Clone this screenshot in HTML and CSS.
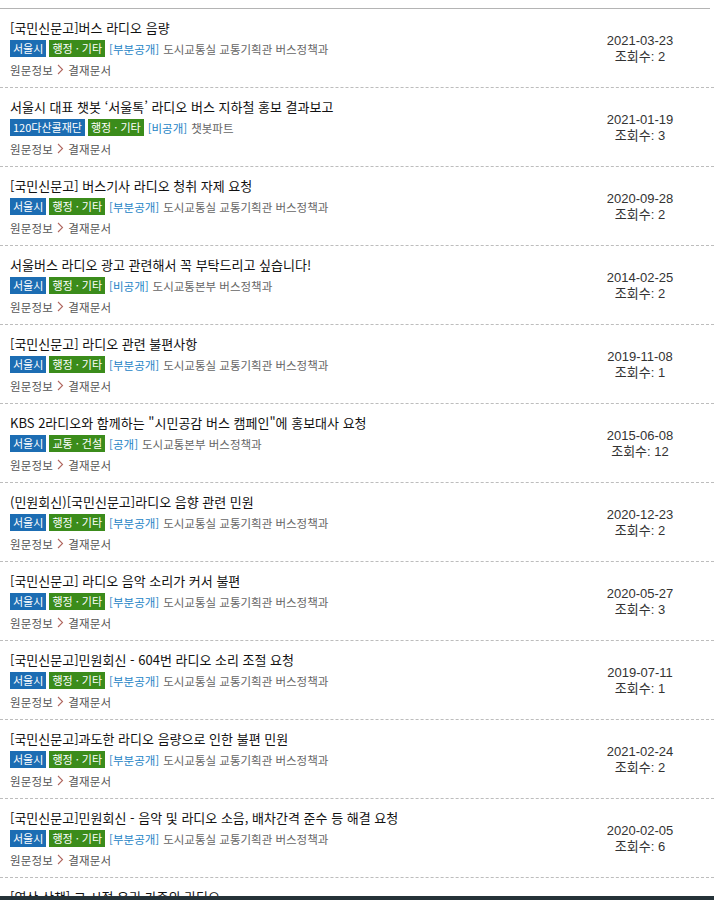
FILE: index.html
```html
<!DOCTYPE html>
<html lang="ko">
<head>
<meta charset="utf-8">
<title>검색 결과</title>
<link rel="stylesheet" href="styles.css">
</head>
<body>
<div class="list">
  <div class="item">
    <div class="main">
      <div class="title">[국민신문고]버스 라디오 음량</div>
      <div class="meta"><span class="tag org">서울시</span><span class="tag cat">행정 · 기타</span><span class="open">[부분공개]</span> <span class="dept">도시교통실 교통기획관 버스정책과</span></div>
      <div class="links"><span>원문정보</span><svg class="chev" width="7" height="11" viewBox="0 0 7 11"><path d="M1 1 L5.5 5.5 L1 10" fill="none" stroke="currentColor" stroke-width="1.1"/></svg><span>결재문서</span></div>
    </div>
    <div class="side"><div>2021-03-23</div><div>조회수: 2</div></div>
  </div>
  <div class="item">
    <div class="main">
      <div class="title">서울시 대표 챗봇 ‘서울톡’ 라디오 버스 지하철 홍보 결과보고</div>
      <div class="meta"><span class="tag org">120다산콜재단</span><span class="tag cat">행정 · 기타</span><span class="open">[비공개]</span> <span class="dept">챗봇파트</span></div>
      <div class="links"><span>원문정보</span><svg class="chev" width="7" height="11" viewBox="0 0 7 11"><path d="M1 1 L5.5 5.5 L1 10" fill="none" stroke="currentColor" stroke-width="1.1"/></svg><span>결재문서</span></div>
    </div>
    <div class="side"><div>2021-01-19</div><div>조회수: 3</div></div>
  </div>
  <div class="item">
    <div class="main">
      <div class="title">[국민신문고] 버스기사 라디오 청취 자제 요청</div>
      <div class="meta"><span class="tag org">서울시</span><span class="tag cat">행정 · 기타</span><span class="open">[부분공개]</span> <span class="dept">도시교통실 교통기획관 버스정책과</span></div>
      <div class="links"><span>원문정보</span><svg class="chev" width="7" height="11" viewBox="0 0 7 11"><path d="M1 1 L5.5 5.5 L1 10" fill="none" stroke="currentColor" stroke-width="1.1"/></svg><span>결재문서</span></div>
    </div>
    <div class="side"><div>2020-09-28</div><div>조회수: 2</div></div>
  </div>
  <div class="item">
    <div class="main">
      <div class="title">서울버스 라디오 광고 관련해서 꼭 부탁드리고 싶습니다!</div>
      <div class="meta"><span class="tag org">서울시</span><span class="tag cat">행정 · 기타</span><span class="open">[비공개]</span> <span class="dept">도시교통본부 버스정책과</span></div>
      <div class="links"><span>원문정보</span><svg class="chev" width="7" height="11" viewBox="0 0 7 11"><path d="M1 1 L5.5 5.5 L1 10" fill="none" stroke="currentColor" stroke-width="1.1"/></svg><span>결재문서</span></div>
    </div>
    <div class="side"><div>2014-02-25</div><div>조회수: 2</div></div>
  </div>
  <div class="item">
    <div class="main">
      <div class="title">[국민신문고] 라디오 관련 불편사항</div>
      <div class="meta"><span class="tag org">서울시</span><span class="tag cat">행정 · 기타</span><span class="open">[부분공개]</span> <span class="dept">도시교통실 교통기획관 버스정책과</span></div>
      <div class="links"><span>원문정보</span><svg class="chev" width="7" height="11" viewBox="0 0 7 11"><path d="M1 1 L5.5 5.5 L1 10" fill="none" stroke="currentColor" stroke-width="1.1"/></svg><span>결재문서</span></div>
    </div>
    <div class="side"><div>2019-11-08</div><div>조회수: 1</div></div>
  </div>
  <div class="item">
    <div class="main">
      <div class="title">KBS 2라디오와 함께하는 "시민공감 버스 캠페인"에 홍보대사 요청</div>
      <div class="meta"><span class="tag org">서울시</span><span class="tag cat">교통 · 건설</span><span class="open">[공개]</span> <span class="dept">도시교통본부 버스정책과</span></div>
      <div class="links"><span>원문정보</span><svg class="chev" width="7" height="11" viewBox="0 0 7 11"><path d="M1 1 L5.5 5.5 L1 10" fill="none" stroke="currentColor" stroke-width="1.1"/></svg><span>결재문서</span></div>
    </div>
    <div class="side"><div>2015-06-08</div><div>조회수: 12</div></div>
  </div>
  <div class="item">
    <div class="main">
      <div class="title">(민원회신)[국민신문고]라디오 음향 관련 민원</div>
      <div class="meta"><span class="tag org">서울시</span><span class="tag cat">행정 · 기타</span><span class="open">[부분공개]</span> <span class="dept">도시교통실 교통기획관 버스정책과</span></div>
      <div class="links"><span>원문정보</span><svg class="chev" width="7" height="11" viewBox="0 0 7 11"><path d="M1 1 L5.5 5.5 L1 10" fill="none" stroke="currentColor" stroke-width="1.1"/></svg><span>결재문서</span></div>
    </div>
    <div class="side"><div>2020-12-23</div><div>조회수: 2</div></div>
  </div>
  <div class="item">
    <div class="main">
      <div class="title">[국민신문고] 라디오 음악 소리가 커서 불편</div>
      <div class="meta"><span class="tag org">서울시</span><span class="tag cat">행정 · 기타</span><span class="open">[부분공개]</span> <span class="dept">도시교통실 교통기획관 버스정책과</span></div>
      <div class="links"><span>원문정보</span><svg class="chev" width="7" height="11" viewBox="0 0 7 11"><path d="M1 1 L5.5 5.5 L1 10" fill="none" stroke="currentColor" stroke-width="1.1"/></svg><span>결재문서</span></div>
    </div>
    <div class="side"><div>2020-05-27</div><div>조회수: 3</div></div>
  </div>
  <div class="item">
    <div class="main">
      <div class="title">[국민신문고]민원회신 - 604번 라디오 소리 조절 요청</div>
      <div class="meta"><span class="tag org">서울시</span><span class="tag cat">행정 · 기타</span><span class="open">[부분공개]</span> <span class="dept">도시교통실 교통기획관 버스정책과</span></div>
      <div class="links"><span>원문정보</span><svg class="chev" width="7" height="11" viewBox="0 0 7 11"><path d="M1 1 L5.5 5.5 L1 10" fill="none" stroke="currentColor" stroke-width="1.1"/></svg><span>결재문서</span></div>
    </div>
    <div class="side"><div>2019-07-11</div><div>조회수: 1</div></div>
  </div>
  <div class="item">
    <div class="main">
      <div class="title">[국민신문고]과도한 라디오 음량으로 인한 불편 민원</div>
      <div class="meta"><span class="tag org">서울시</span><span class="tag cat">행정 · 기타</span><span class="open">[부분공개]</span> <span class="dept">도시교통실 교통기획관 버스정책과</span></div>
      <div class="links"><span>원문정보</span><svg class="chev" width="7" height="11" viewBox="0 0 7 11"><path d="M1 1 L5.5 5.5 L1 10" fill="none" stroke="currentColor" stroke-width="1.1"/></svg><span>결재문서</span></div>
    </div>
    <div class="side"><div>2021-02-24</div><div>조회수: 2</div></div>
  </div>
  <div class="item">
    <div class="main">
      <div class="title">[국민신문고]민원회신 - 음악 및 라디오 소음, 배차간격 준수 등 해결 요청</div>
      <div class="meta"><span class="tag org">서울시</span><span class="tag cat">행정 · 기타</span><span class="open">[부분공개]</span> <span class="dept">도시교통실 교통기획관 버스정책과</span></div>
      <div class="links"><span>원문정보</span><svg class="chev" width="7" height="11" viewBox="0 0 7 11"><path d="M1 1 L5.5 5.5 L1 10" fill="none" stroke="currentColor" stroke-width="1.1"/></svg><span>결재문서</span></div>
    </div>
    <div class="side"><div>2020-02-05</div><div>조회수: 6</div></div>
  </div>
  <div class="item">
    <div class="main">
      <div class="title">[영상 산책] 그 시절 우리 가족의 라디오</div>
    </div>
  </div>
</div>
<div class="bottombar"></div>
</body>
</html>
```

FILE: styles.css
```css
html, body {
  margin: 0;
  padding: 0;
  background: #fff;
}
body {
  font-family: "Noto Sans CJK KR", "Noto Sans", sans-serif;
  color: #222;
  padding-top: 8px;
}
.list {
  border-top: 1px solid #b4b4b4;
  margin-right: 4px;
}
.item {
  display: flex;
  align-items: center;
  border-bottom: 1px dashed #bdbdbd;
  margin-right: -4px;
  padding: 8px 0 7px 10px;
}
.main {
  flex: 1;
  min-width: 0;
}
.title {
  font-size: 13px;
  line-height: 21px;
  color: #111;
  white-space: nowrap;
}
.meta {
  display: flex;
  align-items: center;
  height: 21px;
  font-size: 11.5px;
  white-space: nowrap;
}
.tag {
  display: inline-block;
  color: #fff;
  font-size: 11px;
  line-height: 17px;
  padding: 0 3px;
  margin-right: 3px;
}
.org { background: #1c6db3; }
.cat { background: #3b8c1b; }
.open {
  color: #2584c6;
  margin-left: 1px;
}
.dept {
  color: #666;
  margin-left: 4px;
}
.links {
  display: flex;
  align-items: center;
  height: 21px;
  font-size: 11.5px;
  color: #555;
  letter-spacing: 0.2px;
}
.chev {
  color: #b0675f;
  margin: 0 4px 0 4px;
}
.side {
  width: 148px;
  flex-shrink: 0;
  text-align: center;
  font-family: "Liberation Sans", "Noto Sans CJK KR", sans-serif;
  font-size: 13px;
  line-height: 16px;
  color: #333;
}
.bottombar {
  position: fixed;
  left: 0;
  right: 0;
  bottom: 0;
  height: 4px;
  background: #253238;
}
```
